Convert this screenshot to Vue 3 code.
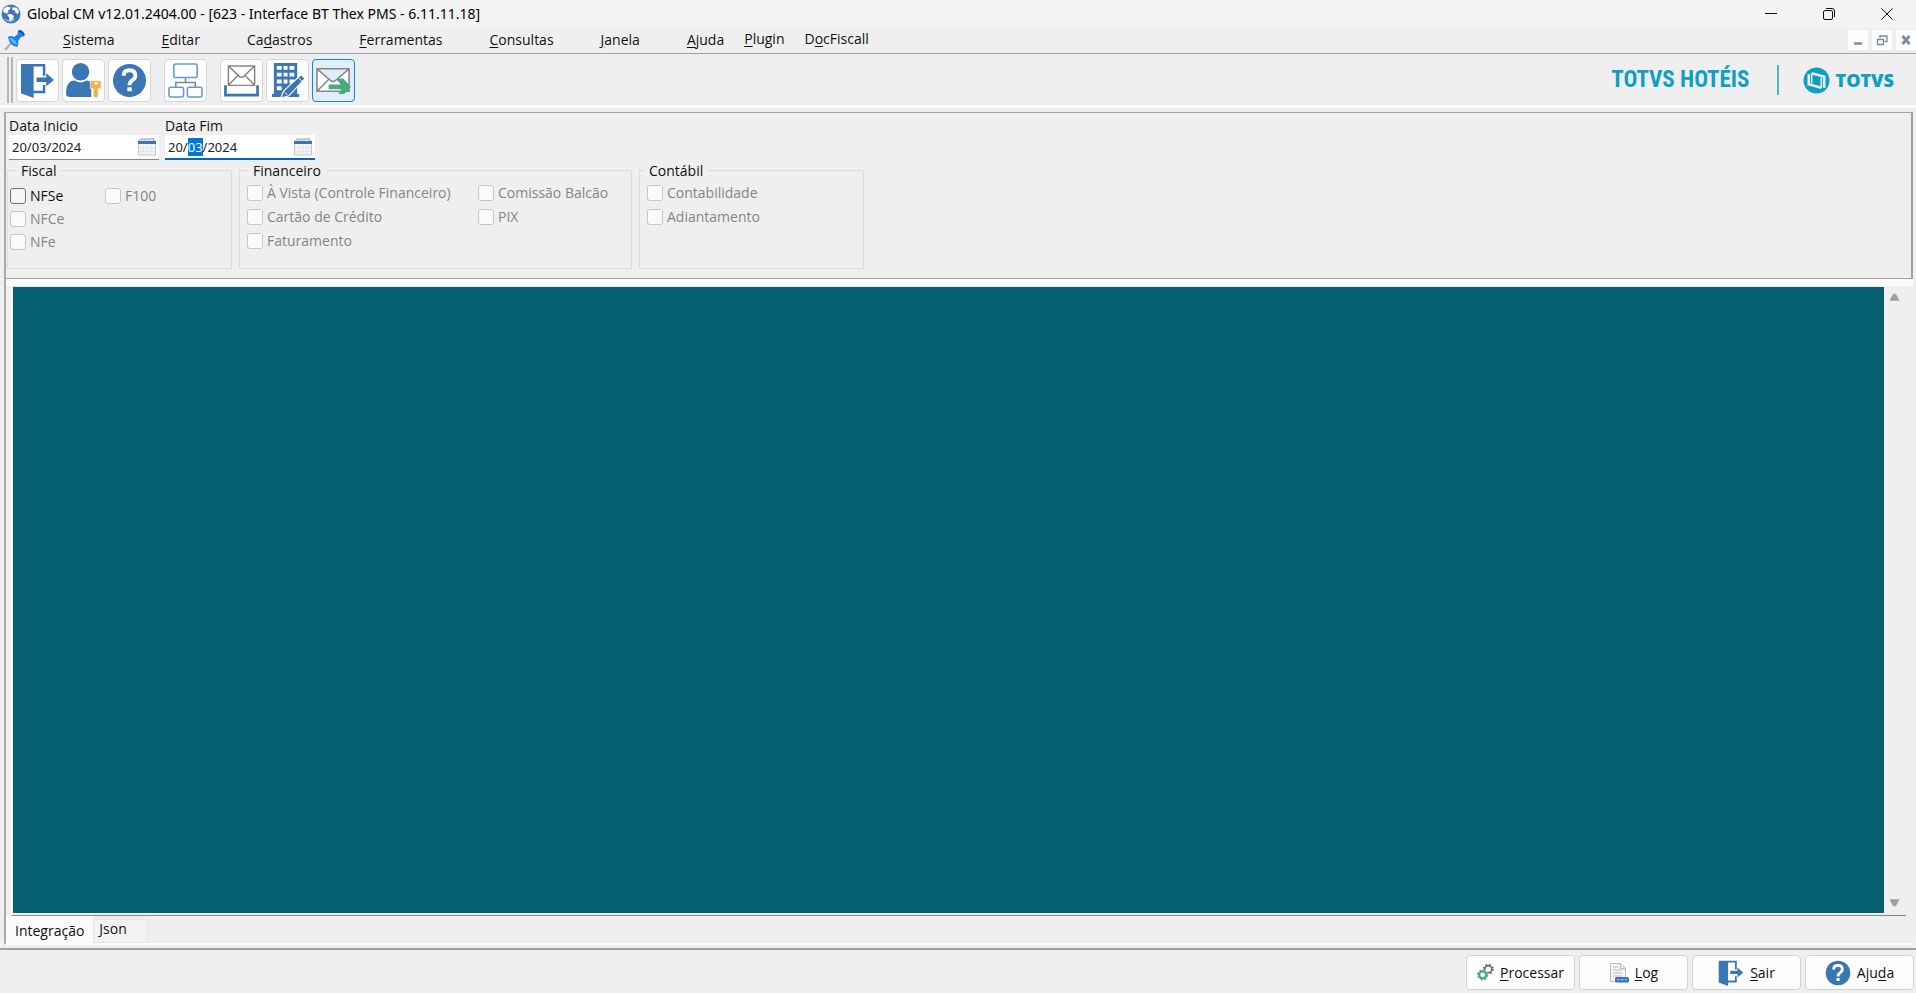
<template>
  <div class="app-window">
    <header class="title-bar">
      <svg class="globe" viewBox="0 0 20 20" aria-hidden="true">
        <circle cx="10" cy="10" r="9.5" fill="#3b78b5" />
        <path d="M3 4.500 6 2.500 9.500 3 9 5.500 7 6.500 7.500 8.500 5.500 9.500 3.500 9 2 7zM11 3.500 15.500 3.500 18 7 17 10 14.500 9 14 6.500 11.500 6zM6 10.500 10 10 13 12 12 15 9.500 17.500 8 16.500 8.500 14z" fill="#fff" />
        <path d="M3 15q6 4 11 .500" stroke="#a9c8e4" fill="none" />
      </svg>
      <h1 class="title">Global CM v12.01.2404.00 - [623 - Interface BT Thex PMS - 6.11.11.18]</h1>
      <div class="window-controls">
        <button type="button" aria-label="Minimizar">
          <svg viewBox="0 0 12 12"><path d="M0 5.500h12" /></svg>
        </button>
        <button type="button" aria-label="Restaurar">
          <svg viewBox="0 0 12 12"><rect x=".5" y="2.500" width="9" height="9" rx="1.500" /><path d="M3 .5h6q2.500 0 2.500 2.500v6" /></svg>
        </button>
        <button type="button" aria-label="Fechar">
          <svg viewBox="0 0 12 12"><path d="M.3.300l11.400 11.400M11.700.300.3 11.700" /></svg>
        </button>
      </div>
    </header>

    <nav class="menu-bar">
      <svg class="pin" viewBox="0 0 22 22" aria-hidden="true">
        <path d="M1 21 8 13" stroke="#aab0b8" stroke-width="2" />
        <path d="M4 8q3-2 6 0l4-3q-1-3 1-4 4 0 6 5-1 2-4 2l-3 4q1 4-1 6Q5 16 4 8z" fill="#1e7de6" />
        <path d="M5 9q2-1 4 1l3 2 1 4Q7 14 5 9z" fill="#5eb0ff" />
        <path d="M15 2q3 0 5 4" stroke="#0b4fa8" stroke-width="1.500" fill="none" />
      </svg>
      <button v-for="item in menus" :key="item.key + item.after" type="button" :class="{ plugin: item.plugin }">
        {{ item.before }}<u>{{ item.key }}</u>{{ item.after }}
      </button>
      <div class="mdi-controls">
        <button type="button" aria-label="Minimizar janela">
          <svg viewBox="0 0 12 12"><path d="M2 9.500h8" stroke-width="2.500" /></svg>
        </button>
        <button type="button" aria-label="Restaurar janela">
          <svg viewBox="0 0 12 12"><path d="M1.500 5.500h6v5h-6zM1 5.500h7M4 2h7.500M4 1v3M11 2v5.500H8.500" stroke-width="1.300" /></svg>
        </button>
        <button type="button" aria-label="Fechar janela">
          <svg viewBox="0 0 12 12"><path d="M2.500 2l7 8M9.500 2l-7 8" stroke-width="2.800" /></svg>
        </button>
      </div>
    </nav>

    <div class="toolbar">
      <span class="grip"></span>
      <div v-for="(group, g) in tools" :key="g" class="tool-group">
        <button
          v-for="tool in group"
          :key="tool.icon"
          type="button"
          :class="['tool', { active: tool.active }]"
          :aria-label="tool.label"
        >
          <svg viewBox="0 0 36 36"><use :href="'#' + tool.icon" /></svg>
        </button>
      </div>
      <div class="brand">
        <span class="product">TOTVS HOTÉIS</span>
        <span class="divider"></span>
        <svg class="brand-mark" viewBox="0 0 28 28" aria-hidden="true">
          <circle cx="14" cy="14" r="13.500" fill="#109fc4" />
          <path d="M9 6.500 22 10V21.500M6 7.500V18L19 21.500" fill="none" stroke="#efefef" stroke-width="2.600" />
          <path d="M9 6.500V17M19 21.500V11" fill="none" stroke="#efefef" stroke-width="1.600" />
        </svg>
        <span class="brand-name">TOTVS</span>
      </div>
    </div>

    <main class="workspace">
      <form class="filters" @submit.prevent>
        <div class="dates">
          <div class="date-field">
            <label for="inicio">Data Inicio</label>
            <div class="date-box">
              <input id="inicio" v-model="inicio" type="text" />
              <button type="button" aria-label="Abrir calendário"><svg viewBox="0 0 18 18"><use href="#calendar" /></svg></button>
            </div>
          </div>
          <div class="date-field">
            <label for="fim">Data Fim</label>
            <div class="date-box focused">
              <input id="fim" ref="fimInput" v-model="fim" type="text" />
              <button type="button" aria-label="Abrir calendário"><svg viewBox="0 0 18 18"><use href="#calendar" /></svg></button>
            </div>
          </div>
        </div>

        <div class="groups">
          <fieldset v-for="group in groups" :key="group.title" :class="group.name">
            <legend>{{ group.title }}</legend>
            <div class="columns">
              <div v-for="(column, c) in group.columns" :key="c" class="column">
                <label v-for="option in column" :key="option.label" :class="{ disabled: !option.enabled }">
                  <input v-model="option.checked" type="checkbox" :disabled="!option.enabled" />
                  {{ option.label }}
                </label>
              </div>
            </div>
          </fieldset>
        </div>
      </form>

      <section class="page">
        <div class="memo">
          <textarea v-model="output" aria-label="Integração" readonly></textarea>
          <div class="scroll">
            <button type="button" aria-label="Rolar para cima"><svg viewBox="0 0 12 9"><path d="M4.500 1h3L11.500 8.500H.5z" /></svg></button>
            <button type="button" aria-label="Rolar para baixo"><svg viewBox="0 0 12 9"><path d="M.5.500h11L7.500 8h-3z" /></svg></button>
          </div>
        </div>
        <div class="tabs" role="tablist">
          <button
            v-for="tab in tabs"
            :key="tab"
            type="button"
            role="tab"
            :aria-selected="tab === activeTab"
            :class="{ active: tab === activeTab }"
            @click="activeTab = tab"
          >{{ tab }}</button>
        </div>
      </section>
    </main>

    <footer class="actions">
      <button type="button">
        <svg class="icon-small" viewBox="0 0 18 18"><use href="#gears" /></svg>
        <span><u>P</u>rocessar</span>
      </button>
      <button type="button">
        <svg class="icon-medium" viewBox="0 0 20 20"><use href="#log" /></svg>
        <span><u>L</u>og</span>
      </button>
      <button type="button">
        <svg class="icon-large" viewBox="0 0 36 36"><use href="#exit" /></svg>
        <span><u>S</u>air</span>
      </button>
      <button type="button">
        <svg class="icon-large" viewBox="0 0 36 36"><use href="#help" /></svg>
        <span>Aju<u>d</u>a</span>
      </button>
    </footer>

    <svg class="sprite" aria-hidden="true">
      <symbol id="exit" viewBox="0 0 36 36">
        <path d="M1 1H26V13H23.500V3.500H14V28.500H23.500V22.500H26V31H14V36L1 31z" fill="#3b76b4" />
        <path d="M17 15H27V10.500L35 17.500 27 24V19.500H17z" fill="#3b76b4" />
      </symbol>
      <symbol id="user" viewBox="0 0 36 36">
        <circle cx="15" cy="9" r="9" fill="#3b76b4" />
        <path d="M0 32Q0 18 9 18 15 22 21 18 25 18 26 21V35H4Q0 35 0 32z" fill="#3b76b4" />
        <path d="M25 18H36V26.500H33V34.500L31 36 28 34.500V26.500H25z" fill="#ebb052" stroke="#fff" stroke-width=".6" />
        <path d="M29 21h4" stroke="#fff" stroke-width="2" />
      </symbol>
      <symbol id="help" viewBox="0 0 36 36">
        <circle cx="18" cy="18" r="17" fill="#3b76b4" />
        <path d="M12 13Q12 7.500 18 7.500T24 13Q24 15.500 21 17.500 18 19.500 18 23" fill="none" stroke="#fff" stroke-width="4" />
        <rect x="15.800" y="25" width="4.500" height="4" fill="#fff" />
      </symbol>
      <symbol id="tree" viewBox="0 0 36 36">
        <path d="M18 15V20M8 25V20H28V25" fill="none" stroke="#858585" stroke-width="1.500" />
        <g fill="#fff" stroke="#6799ca" stroke-width="1.600">
          <rect x="6" y="1" width="24" height="14" rx="2" />
          <rect x="1" y="25" width="15" height="10" rx="2" />
          <rect x="20" y="25" width="15" height="10" rx="2" />
        </g>
      </symbol>
      <symbol id="inbox" viewBox="0 0 36 36">
        <path d="M4.500 3H31.500V23H4.500zM4.500 3 16 14Q18 15.500 20 14L31.500 3M4.500 23 14 13M31.500 23 22 13" fill="#fff" stroke="#858585" stroke-width="1.500" />
        <path d="M1.500 23V33H34.500V23" fill="none" stroke="#3b76b4" stroke-width="2.800" />
      </symbol>
      <symbol id="building" viewBox="0 0 36 36">
        <path d="M4 0H28V32H30V35H2V32H4z" fill="#3b76b4" />
        <path d="M7 3h5v4H7zM14 3h4v4h-4zM20 3h5v4h-5zM7 10h5v4H7zM14 10h4v4h-4zM20 10h5v4h-5zM7 17h5v4H7zM14 17h4v4h-4zM20 17h5v4h-5zM7 24h5v4H7z" fill="#fff" />
        <path d="M11 36 14 29 32 12 36 16 19 34z" fill="#3b76b4" stroke="#fff" stroke-width="1.200" />
        <path d="M15 30l3 3M29 15l4 4" stroke="#fff" />
      </symbol>
      <symbol id="send" viewBox="0 0 36 36">
        <path d="M1 6H34V29H1zM1 6 15 18Q17.500 20 20 18L34 6M1 29 13 17M34 29 22 17" fill="#fff" stroke="#858585" stroke-width="1.600" />
        <path d="M13 22H25L22 16H28L36 24.500 29 32H23L26 27H13z" fill="#45ad7f" />
      </symbol>
      <symbol id="calendar" viewBox="0 0 18 18">
        <path d="M.5 3h17v14H.5z" fill="#f3f3f4" stroke="#c3c6cb" />
        <path d="M1 10h16M1 13.500h16M5 7v10M9 7v10M13 7v10" stroke="#e2e4e7" />
        <path d="M0 3h18v3H0z" fill="#3b76b4" />
        <path d="M2 2.500Q2 .8 4 .8h1.500M6 2.500Q6 .8 8 .8h1.500M10 2.500Q10 .8 12 .8H15.500L16 3" fill="none" stroke="#a9a9ab" stroke-width="1.200" />
      </symbol>
      <symbol id="gears" viewBox="0 0 18 18">
        <circle cx="12" cy="5.500" r="3.600" fill="none" stroke="#666" stroke-width="1.600" />
        <circle cx="12" cy="5.500" r="4.800" fill="none" stroke="#666" stroke-width="1.800" stroke-dasharray="1.900 1.900" />
        <circle cx="6" cy="11.500" r="6" fill="#fdfdfd" />
        <circle cx="6" cy="11.500" r="3.800" fill="none" stroke="#45ad7f" stroke-width="2.400" />
        <circle cx="6" cy="11.500" r="5.200" fill="none" stroke="#45ad7f" stroke-width="1.600" stroke-dasharray="2 2.080" />
      </symbol>
      <symbol id="log" viewBox="0 0 20 20">
        <path d="M1.500.500h10l5 5v13h-15z" fill="#f5f5f5" stroke="#bcbcbc" />
        <path d="M11.500.500v5h5M4 4h5M4 7h9M4 10h9M4 13h9" fill="none" stroke="#bcbcbc" />
        <rect x="6" y="14" width="14" height="5.500" rx="1.500" fill="#3b76b4" />
        <path d="M8 16.700h2.500M12 16.700h2.500M16 16.700h2" stroke="#b9d0e8" />
      </symbol>
    </svg>
  </div>
</template>

<script setup>
import { ref, reactive, onMounted } from 'vue'

/** Itens do menu, com a letra de atalho separada */
const menus = [
  { before: '', key: 'S', after: 'istema' },
  { before: '', key: 'E', after: 'ditar' },
  { before: 'Ca', key: 'd', after: 'astros' },
  { before: '', key: 'F', after: 'erramentas' },
  { before: '', key: 'C', after: 'onsultas' },
  { before: '', key: 'J', after: 'anela' },
  { before: '', key: 'A', after: 'juda' },
  { before: '', key: 'P', after: 'lugin', plugin: true },
  { before: 'D', key: 'o', after: 'cFiscall', plugin: true },
]

const tools = [
  [
    { icon: 'exit', label: 'Sair' },
    { icon: 'user', label: 'Trocar usuário' },
    { icon: 'help', label: 'Ajuda' },
  ],
  [{ icon: 'tree', label: 'Estrutura' }],
  [
    { icon: 'inbox', label: 'Mensagens' },
    { icon: 'building', label: 'Empresa' },
    { icon: 'send', label: 'Enviar', active: true },
  ],
]

const groups = reactive([
  {
    name: 'fiscal',
    title: 'Fiscal',
    columns: [
      [
        { label: 'NFSe', enabled: true, checked: false },
        { label: 'NFCe', checked: false },
        { label: 'NFe', checked: false },
      ],
      [{ label: 'F100', checked: false }],
    ],
  },
  {
    name: 'financeiro',
    title: 'Financeiro',
    columns: [
      [
        { label: 'À Vista (Controle Financeiro)', checked: false },
        { label: 'Cartão de Crédito', checked: false },
        { label: 'Faturamento', checked: false },
      ],
      [
        { label: 'Comissão Balcão', checked: false },
        { label: 'PIX', checked: false },
      ],
    ],
  },
  {
    name: 'contabil',
    title: 'Contábil',
    columns: [
      [
        { label: 'Contabilidade', checked: false },
        { label: 'Adiantamento', checked: false },
      ],
    ],
  },
])

const tabs = ['Integração', 'Json']
const activeTab = ref('Integração')
const inicio = ref('20/03/2024')
const fim = ref('20/03/2024')
const output = ref('')
const fimInput = ref(null)

onMounted(() => {
  // o foco começa no mês da data final
  fimInput.value.focus()
  fimInput.value.setSelectionRange(3, 5)
})
</script>

<style>
body {
  background: #efefef;
}
</style>

<style scoped>
.app-window {
  display: flex;
  flex-direction: column;
  min-height: 100vh;
  background: #efefef;
  color: #111;
  font: 14px/18px "Open Sans", "Noto Sans", sans-serif;
}

.app-window * {
  box-sizing: border-box;
}

button {
  font: inherit;
  color: inherit;
  border: none;
  background: none;
  padding: 0;
}

u {
  text-underline-offset: 2px;
}

.sprite {
  position: absolute;
  width: 0;
  height: 0;
}

.title-bar {
  display: flex;
  align-items: center;
  height: 28px;
  padding-left: 1px;
  background: #f3f3f3;
}

.globe {
  width: 20px;
  height: 20px;
}

.title {
  margin: 0 0 0 6px;
  font: 14px/18px "Noto Sans", sans-serif;
  color: #000;
}

.window-controls {
  display: flex;
  margin-left: auto;
}

.window-controls button {
  width: 58px;
  height: 28px;
  display: flex;
  align-items: center;
  justify-content: center;
}

.window-controls svg {
  width: 12px;
  height: 12px;
  fill: none;
  stroke: #111;
}

.menu-bar {
  display: flex;
  align-items: center;
  gap: 47px;
  height: 26px;
  padding: 0 0 2px 4px;
  border-bottom: 1px solid #a3a3a3;
}

.menu-bar .pin {
  width: 22px;
  height: 22px;
  margin-right: -10px;
}

.menu-bar .plugin {
  margin-left: -27px;
  padding-bottom: 2px;
}

.mdi-controls {
  display: flex;
  gap: 4px;
  margin-left: auto;
}

.mdi-controls button {
  display: flex;
  align-items: center;
  justify-content: center;
  width: 20px;
  height: 20px;
  background: #fdfdfd;
}

.mdi-controls svg {
  width: 12px;
  height: 12px;
  fill: none;
  stroke: #7c8b9b;
}

.toolbar {
  display: flex;
  align-items: center;
  gap: 13px;
  height: 54px;
  padding: 1px 0 0 7px;
  border-bottom: 3px solid #fcfcfc;
}

.grip {
  width: 6px;
  height: 46px;
  margin-right: -10px;
  border: solid #b8b8b8;
  border-width: 0 2px;
}

.tool-group {
  display: flex;
  gap: 3px;
}

.tool {
  display: flex;
  align-items: center;
  justify-content: center;
  width: 43px;
  height: 43px;
  border: 1px solid #d6d6d6;
  border-radius: 4px;
  background: #fdfdfd;
}

.tool.active {
  border-color: #1a84d9;
  background: #e0eef9;
}

.tool svg {
  width: 35px;
  height: 35px;
}

.brand {
  display: flex;
  align-items: center;
  margin-left: auto;
  padding-right: 22px;
  color: #109fc4;
}

.product {
  font: bold 23px/30px "Roboto Condensed", "Open Sans Condensed", "Noto Sans Condensed", "Open Sans", sans-serif;
}

.divider {
  width: 2px;
  height: 30px;
  margin: 0 24px 0 27px;
  background: #4bb5d1;
}

.brand-mark {
  width: 27px;
  height: 27px;
}

.brand-name {
  margin-left: 6px;
  font: 800 18px/30px "Open Sans", sans-serif;
}

.workspace {
  flex: 1;
  display: flex;
  flex-direction: column;
  margin: 4px 3px 0 4px;
  border-left: 2px solid #a9a9a9;
  border-bottom: 2px solid #fcfcfc;
}

.filters {
  padding: 4px 1px 9px;
  border: solid #a3a3a3;
  border-width: 1px 2px 1px 0;
}

.dates {
  display: flex;
  gap: 6px;
  padding-left: 2px;
}

.date-field {
  width: 150px;
}

.date-field label {
  display: block;
}

.date-box {
  display: flex;
  align-items: center;
  height: 25px;
  padding: 0 3px;
  background: #fff;
  border-bottom: 1px solid #868686;
}

.date-box.focused {
  border-bottom: 2px solid #0067c0;
}

.date-box input {
  flex: 1;
  min-width: 0;
  border: none;
  outline: none;
  padding: 0;
  background: none;
  color: #222;
  font: 13px/18px "Noto Sans", sans-serif;
}

.date-box input::selection {
  background: #0078d7;
  color: #fff;
}

.date-box button,
.date-box svg {
  display: block;
  width: 18px;
  height: 18px;
}

.groups {
  display: flex;
  gap: 7px;
}

fieldset {
  min-width: 0;
  height: 109px;
  margin: 0;
  padding: 0 7px;
  border: 1px solid #dcdcdc;
}

legend {
  margin-left: 1px;
  padding: 2px 5px 0;
  color: #111;
}

.fiscal {
  width: 225px;
  padding: 0 2px;
}

.fiscal legend {
  margin-left: 6px;
}

.financeiro {
  width: 393px;
}

.contabil {
  width: 225px;
}

.contabil legend {
  margin-left: -3px;
}

.columns {
  display: flex;
}

.column {
  display: flex;
  flex-direction: column;
  gap: 6px;
  padding-top: 4px;
}

.fiscal .column {
  gap: 5px;
  padding-top: 7px;
}

.fiscal .column:first-child {
  width: 95px;
}

.financeiro .column:first-child {
  width: 231px;
}

.column label {
  display: flex;
  align-items: center;
  gap: 4px;
}

.column .disabled {
  color: #858585;
}

input[type='checkbox'] {
  appearance: none;
  width: 16px;
  height: 16px;
  margin: 0;
  border: 1px solid #707070;
  border-radius: 3px;
  background: #f6f6f6;
}

input[type='checkbox']:disabled {
  border-color: #c6c6c6;
  background: #fafafa;
}

.page {
  flex: 1;
  display: flex;
  flex-direction: column;
  padding-top: 6px;
  background: linear-gradient(#fafafa 7px, #efefef 7px);
}

.memo {
  flex: 1;
  display: flex;
  margin: 0 7px 0 5px;
  padding: 2px 2px 2px 1px;
  border-left: 1px solid #fafafa;
  border-bottom: 1px solid #868686;
}

.memo textarea {
  flex: 1;
  display: block;
  padding: 0;
  border: none;
  border-radius: 0;
  outline: none;
  resize: none;
  background: #065f6e;
  color: #fff;
  font: inherit;
}

.scroll {
  display: flex;
  flex-direction: column;
  justify-content: space-between;
  width: 20px;
  padding: 5px 0;
}

.scroll button {
  display: flex;
  justify-content: center;
}

.scroll svg {
  width: 11px;
  height: 10px;
  fill: #9f9f9f;
}

.tabs {
  display: flex;
  align-items: flex-end;
  height: 27px;
}

.tabs button {
  height: 24px;
  padding: 0 20px 4px 5px;
  border: 1px solid #e6e6e6;
  background: #f2f2f2;
}

.tabs .active {
  height: 27px;
  padding: 2px 9px 0;
  border: none;
  background: #fafafa;
}

.actions {
  display: flex;
  justify-content: flex-end;
  gap: 4px;
  margin-top: 3px;
  padding: 5px 2px 3px;
  border-top: 2px solid #a0a0a0;
}

.actions button {
  display: flex;
  align-items: center;
  justify-content: center;
  gap: 6px;
  width: 109px;
  height: 35px;
  border: 1px solid #d2d2d2;
  border-radius: 4px;
  background: #fdfdfd;
}

.icon-small {
  width: 17px;
  height: 17px;
}

.icon-medium {
  width: 20px;
  height: 20px;
}

.icon-large {
  width: 26px;
  height: 26px;
}
</style>
